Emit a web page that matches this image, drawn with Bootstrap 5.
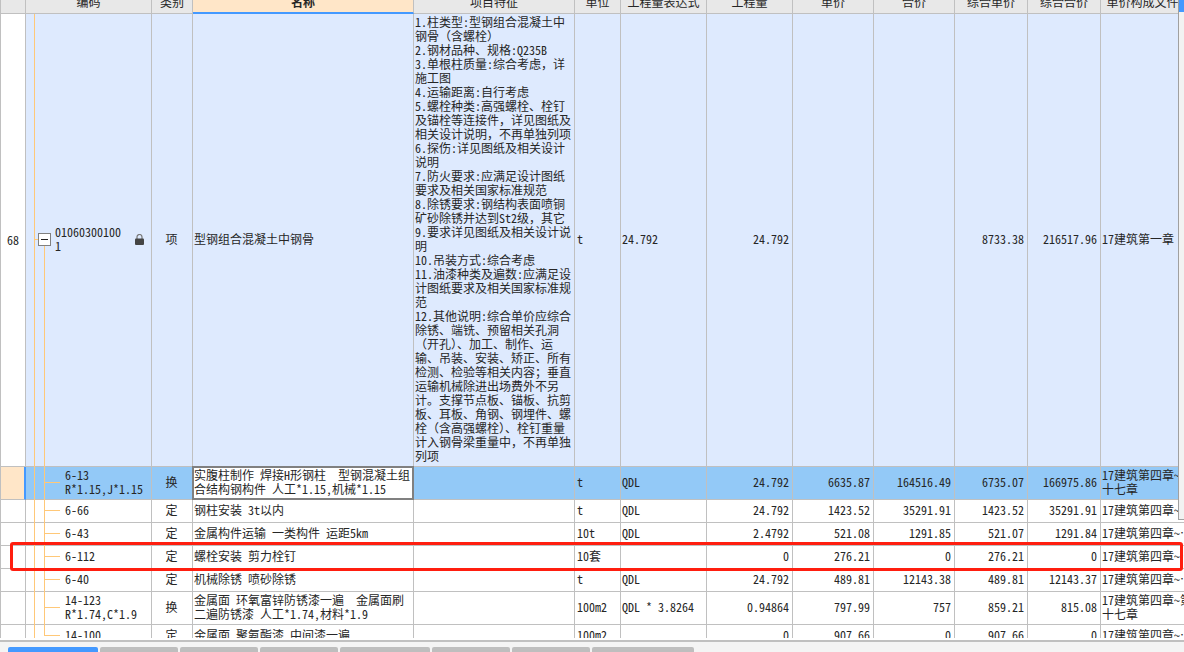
<!DOCTYPE html>
<html lang="zh-CN">
<head>
<meta charset="utf-8">
<meta name="viewport" content="width=device-width, initial-scale=1">
<title>工程量清单</title>
<link href="https://cdn.jsdelivr.net/npm/bootstrap@5.3.0/dist/css/bootstrap.min.css" rel="stylesheet">
<style>
body{font:12px/14px "Noto Sans Mono CJK SC","Noto Sans CJK SC",monospace;color:#262626;background:#fff}
.pane{min-height:0}
/* the sheet is scrolled so that the header is partly out of view */
.sheet{table-layout:fixed;border-collapse:separate;border-spacing:0;border-left:1px solid #c0c0c0;margin-top:-10px}
.sheet th,.sheet td{border-right:1px solid #c0c0c0;border-bottom:1px solid #c0c0c0;padding:0 2px 2px 1px;white-space:nowrap;overflow:hidden;vertical-align:middle}
.sheet th{height:24px;background:#e8e8e8;font-weight:400;text-align:center;padding:1px}
.sheet th.active-col{background:#ffe6c8;font-weight:700;border-bottom:2px solid #4499ff;padding-bottom:0}
.sheet td.no{text-align:center;background:#fff;padding:1px}
.sheet td.kind{text-align:center}
.sheet td.num{text-align:right;padding-right:3px}
.sheet td.unit{padding-left:2px}
.sheet tr>:last-child{border-right:0}
.sheet tbody tr{height:23px}
.sheet tr.group td{background:#deeafe;height:453px}
.sheet tr.group td.no{background:#fff}
.sheet tr.two{height:33px}
.sheet tr.sel td{background:#93c9f7}
.sheet tr.sel td.no{background:#ffe6c8;border-right:2px solid #4499ff}
.sheet tr.sel td.edit{background:#fff;position:relative;overflow:visible}
.edit::after{content:"";position:absolute;inset:-1px -1px -1px -1px;border:2px solid #808080}
/* tree guides */
.sheet td.tree{position:relative;padding-left:39px;overflow:visible}
.sheet td.tree::before{content:"";position:absolute;left:8px;top:0;bottom:-1px;width:11px;border:solid #ffc878;border-width:0 1px}
.sheet td.tree::after{content:"";position:absolute;left:19px;top:calc(50% - 1px);width:15px;border-top:1px solid #ffc878}
.sheet .group td.tree{padding-left:29px}
.sheet .group td.tree::before{border-right:0}
.sheet .group td.tree::after{left:18px;top:50%;width:0;bottom:-1px;border-top:0;border-left:1px solid #ffc878}
.sheet .last td.tree::before{border-right:0}
.sheet .last td.tree::after{left:18px;top:0;height:50%;width:16px;border-top:0;border-left:1px solid #ffc878;border-bottom:1px solid #ffc878}
.fold{position:absolute;z-index:1;left:12px;top:50%;margin-top:-7px;width:13px;height:13px;padding:0;border:1px solid #808080;background:#fff;line-height:0}
.fold::before{content:"";position:absolute;left:-4px;top:5px;width:3px;border-top:1px solid #ffc878}
.fold svg,.lock{display:block}
.lock{margin-right:5px}
.marked{position:relative}
.mark-box{position:absolute;z-index:2;top:-4px;bottom:-2px;left:9px;right:1px;border:3px solid #ff1e0f;border-radius:3px;pointer-events:none}
.scroller{position:absolute;top:0;right:0;width:6px;height:520px;background:#f2f2f2;border-left:1px solid #a0a0a0;border-bottom:1px solid #a0a0a0}
.scroller i{display:block;height:12px;background:#4499ff}
.split{border-top:2px solid #c0c0c0;background:#f4f4f4;height:12px;margin-top:2px;padding:5px 0 0 8px;gap:2px}
.split button{border:0;background:#bebebe;height:5px;width:78px;border-radius:2px 2px 0 0;padding:0}
.split button.on{background:#4499ff}
.split .w90{width:90px}.split .w102{width:102px}
</style>
</head>
<body class="vh-100 d-flex flex-column overflow-hidden">
<main class="pane flex-fill position-relative overflow-hidden">
<table class="sheet w-100">
<colgroup><col style="width:25px"><col style="width:126px"><col style="width:41px"><col style="width:221px"><col style="width:161px"><col style="width:46px"><col style="width:86px"><col style="width:86px"><col style="width:81px"><col style="width:81px"><col style="width:73px"><col style="width:73px"><col></colgroup>
<thead><tr><th></th><th>编码</th><th>类别</th><th class="active-col">名称</th><th>项目特征</th><th>单位</th><th>工程量表达式</th><th>工程量</th><th>单价</th><th>合价</th><th>综合单价</th><th>综合合价</th><th>单价构成文件</th></tr></thead>
<tbody>
<tr class="group"><td class="no">68</td><td class="tree"><button class="fold" aria-label="折叠"><svg width="11" height="11"><path d="M2 5.500h7" stroke="#222"/></svg></button><div class="d-flex align-items-center justify-content-between"><span>01060300100<br>1</span><svg class="lock" width="9" height="11" viewBox="0 0 9 11"><path d="M2 5V3a2.500 2.500 0 0 1 5 0v2" fill="none" stroke="#777" stroke-width="1.200"/><rect y="4.500" width="9" height="6.500" rx="1" fill="#444"/></svg></div></td><td class="kind">项</td><td>型钢组合混凝土中钢骨</td>
<td>1.柱类型:型钢组合混凝土中<br>钢骨（含螺栓）<br>2.钢材品种、规格:Q235B<br>3.单根柱质量:综合考虑，详<br>施工图<br>4.运输距离:自行考虑<br>5.螺栓种类:高强螺栓、栓钉<br>及锚栓等连接件，详见图纸及<br>相关设计说明，不再单独列项<br>6.探伤:详见图纸及相关设计<br>说明<br>7.防火要求:应满足设计图纸<br>要求及相关国家标准规范<br>8.除锈要求:钢结构表面喷铜<br>矿砂除锈并达到St2级，其它<br>9.要求详见图纸及相关设计说<br>明<br>10.吊装方式:综合考虑<br>11.油漆种类及遍数:应满足设<br>计图纸要求及相关国家标准规<br>范<br>12.其他说明:综合单价应综合<br>除锈、端铣、预留相关孔洞<br>（开孔）、加工、制作、运<br>输、吊装、安装、矫正、所有<br>检测、检验等相关内容；垂直<br>运输机械除进出场费外不另<br>计。支撑节点板、锚板、抗剪<br>板、耳板、角钢、钢埋件、螺<br>栓（含高强螺栓）、栓钉重量<br>计入钢骨梁重量中，不再单独<br>列项</td>
<td class="unit">t</td><td>24.792</td><td class="num">24.792</td><td></td><td></td><td class="num">8733.38</td><td class="num">216517.96</td><td>17建筑第一章</td></tr>
<tr class="two sel"><td class="no"></td><td class="tree">6-13<br>R*1.15,J*1.15</td><td class="kind">换</td><td class="edit">实腹柱制作 焊接H形钢柱&nbsp; 型钢混凝土组<br>合结构钢构件 人工*1.15,机械*1.15</td><td></td><td class="unit">t</td><td>QDL</td><td class="num">24.792</td><td class="num">6635.87</td><td class="num">164516.49</td><td class="num">6735.07</td><td class="num">166975.86</td><td>17建筑第四章~第<br>十七章</td></tr>
<tr><td class="no"></td><td class="tree">6-66</td><td class="kind">定</td><td>钢柱安装 3t以内</td><td></td><td class="unit">t</td><td>QDL</td><td class="num">24.792</td><td class="num">1423.52</td><td class="num">35291.91</td><td class="num">1423.52</td><td class="num">35291.91</td><td>17建筑第四章~…</td></tr>
<tr><td class="no"></td><td class="tree">6-43</td><td class="kind">定</td><td>金属构件运输 一类构件 运距5km</td><td></td><td class="unit">10t</td><td>QDL</td><td class="num">2.4792</td><td class="num">521.08</td><td class="num">1291.85</td><td class="num">521.07</td><td class="num">1291.84</td><td>17建筑第四章~…</td></tr>
<tr class="marked"><td class="no"><span class="mark-box"></span></td><td class="tree">6-112</td><td class="kind">定</td><td>螺栓安装 剪力栓钉</td><td></td><td class="unit">10套</td><td></td><td class="num">0</td><td class="num">276.21</td><td class="num">0</td><td class="num">276.21</td><td class="num">0</td><td>17建筑第四章~…</td></tr>
<tr><td class="no"></td><td class="tree">6-40</td><td class="kind">定</td><td>机械除锈 喷砂除锈</td><td></td><td class="unit">t</td><td>QDL</td><td class="num">24.792</td><td class="num">489.81</td><td class="num">12143.38</td><td class="num">489.81</td><td class="num">12143.37</td><td>17建筑第四章~…</td></tr>
<tr class="two"><td class="no"></td><td class="tree">14-123<br>R*1.74,C*1.9</td><td class="kind">换</td><td>金属面 环氧富锌防锈漆一遍&nbsp; 金属面刷<br>二遍防锈漆 人工*1.74,材料*1.9</td><td></td><td class="unit">100m2</td><td>QDL * 3.8264</td><td class="num">0.94864</td><td class="num">797.99</td><td class="num">757</td><td class="num">859.21</td><td class="num">815.08</td><td>17建筑第四章~第<br>十七章</td></tr>
<tr class="last"><td class="no"></td><td class="tree">14-100</td><td class="kind">定</td><td>金属面 聚氨酯漆 中间漆一遍</td><td></td><td class="unit">100m2</td><td></td><td class="num">0</td><td class="num">907.66</td><td class="num">0</td><td class="num">907.66</td><td class="num">0</td><td>17建筑第四章~…</td></tr>
</tbody>
</table>
<div class="scroller"><i></i></div>
</main>
<nav class="split d-flex flex-shrink-0 overflow-hidden" aria-label="面板">
<button class="on w90" aria-label="面板一"></button><button aria-label="面板二"></button><button aria-label="面板三"></button><button aria-label="面板四"></button><button class="w90" aria-label="面板五"></button><button aria-label="面板六"></button><button aria-label="面板七"></button><button class="w102" aria-label="面板八"></button>
</nav>
<script src="https://cdn.jsdelivr.net/npm/bootstrap@5.3.0/dist/js/bootstrap.bundle.min.js"></script>
</body>
</html>
